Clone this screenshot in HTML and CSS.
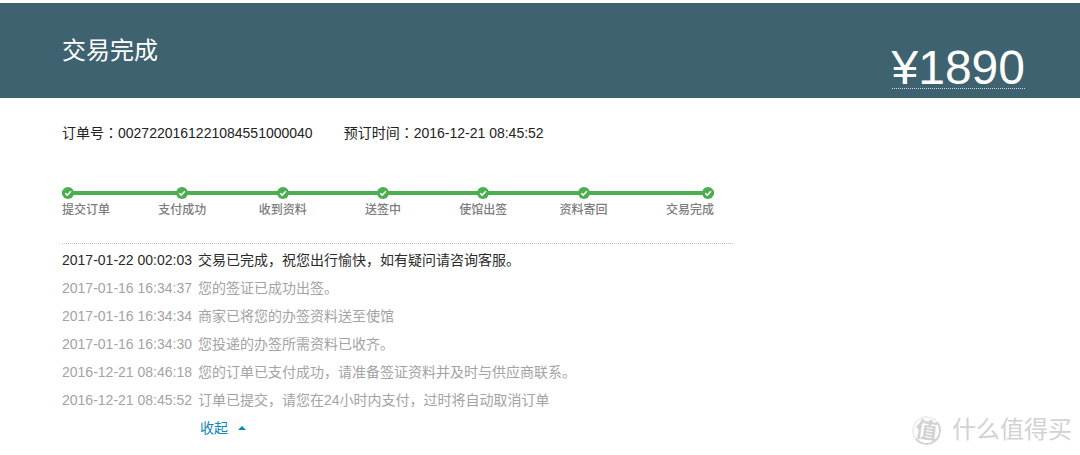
FILE: index.html
```html
<!DOCTYPE html>
<html lang="zh-CN">
<head>
<meta charset="utf-8">
<meta name="viewport" content="width=device-width, initial-scale=1">
<title>交易完成</title>
<link rel="stylesheet" href="styles.css">
</head>
<body>
<svg class="defs" aria-hidden="true">
  <symbol id="tick" viewBox="0 0 12 12">
    <circle cx="6" cy="6" r="6" fill="#4bae50"/>
    <path d="M3.2 6.2 5.2 8.1 8.9 4.2" fill="none" stroke="#fff" stroke-width="1.5"/>
  </symbol>
</svg>
<header class="banner">
  <h1 class="banner-title">交易完成</h1>
  <div class="price">¥1890</div>
</header>
<main class="content">
  <div class="order-info">
    <span>订单号<span class="colon" lang="zh-TW">：</span>0027220161221084551000040</span>
    <span>预订时间<span class="colon" lang="zh-TW">：</span>2016-12-21 08:45:52</span>
  </div>
  <section class="progress">
    <ol class="steps">
      <li class="step"><svg class="tick"><use href="#tick"/></svg><span>提交订单</span></li>
      <li class="step"><svg class="tick"><use href="#tick"/></svg><span>支付成功</span></li>
      <li class="step"><svg class="tick"><use href="#tick"/></svg><span>收到资料</span></li>
      <li class="step"><svg class="tick"><use href="#tick"/></svg><span>送签中</span></li>
      <li class="step"><svg class="tick"><use href="#tick"/></svg><span>使馆出签</span></li>
      <li class="step"><svg class="tick"><use href="#tick"/></svg><span>资料寄回</span></li>
      <li class="step"><svg class="tick"><use href="#tick"/></svg><span>交易完成</span></li>
    </ol>
  </section>
  <ul class="log">
    <li class="entry current"><time>2017-01-22 00:02:03</time><span>交易已完成，祝您出行愉快，如有疑问请咨询客服。</span></li>
    <li class="entry"><time>2017-01-16 16:34:37</time><span>您的签证已成功出签。</span></li>
    <li class="entry"><time>2017-01-16 16:34:34</time><span>商家已将您的办签资料送至使馆</span></li>
    <li class="entry"><time>2017-01-16 16:34:30</time><span>您投递的办签所需资料已收齐。</span></li>
    <li class="entry"><time>2016-12-21 08:46:18</time><span>您的订单已支付成功，请准备签证资料并及时与供应商联系。</span></li>
    <li class="entry"><time>2016-12-21 08:45:52</time><span>订单已提交，请您在24小时内支付，过时将自动取消订单</span></li>
  </ul>
  <button class="toggle" type="button">收起<svg class="caret" viewBox="0 0 8 4"><path d="M0 4 4 0 8 4z" fill="#0a86c2"/></svg></button>
</main>
<div class="watermark">
  <span class="mark">值</span>
  <span>什么值得买</span>
</div>
</body>
</html>
```
FILE: styles.css
```css
* {
  box-sizing: border-box;
}

body {
  margin: 0;
  padding-top: 3px;
  background: #fff;
  color: #222;
  font: 14px/20px "Liberation Sans", "Noto Sans CJK SC", sans-serif;
}

.defs {
  display: none;
}

.banner {
  display: flex;
  justify-content: space-between;
  align-items: flex-end;
  padding: 32px 55px 9px 62px;
  background: #3f6270;
  color: #fff;
}

.banner-title {
  align-self: flex-start;
  margin: 0;
  font-size: 24px;
  font-weight: 400;
  line-height: 32px;
}

.price {
  border-bottom: 1px dotted #d5dde0;
  font-size: 48px;
  line-height: 40px;
  padding-top: 13px;
}

.content {
  padding: 24px 62px 0;
}

.order-info {
  display: flex;
  gap: 31px;
}

.colon {
  font-family: "Noto Sans CJK TC", sans-serif;
}

.progress {
  max-width: 671px;
  margin-top: 44px;
  padding: 0 19px 24px 0;
  border-bottom: 1px dotted #bbb;
}

.steps {
  display: grid;
  grid-template-columns: 70fr repeat(5, 100fr) 80fr;
  margin: 0;
  padding: 0;
  list-style: none;
  background: linear-gradient(#4bae50, #4bae50) 0 4px / 100% 4px no-repeat;
}

.step {
  display: flex;
  flex-direction: column;
  align-items: center;
  gap: 2px;
  color: #7c7c7c;
  font-size: 12px;
  font-weight: 500;
  line-height: 18px;
}

.step:first-child {
  align-items: flex-start;
}

.step:last-child {
  align-items: flex-end;
}

.tick {
  width: 12px;
  height: 12px;
}

.log {
  margin: 2px 0 0;
  padding: 0;
  list-style: none;
}

.entry {
  display: flex;
  gap: 4px;
  color: #a3a3a3;
  line-height: 28px;
}

.entry time {
  flex: 0 0 132px;
}

.entry.current {
  color: #2b2b2b;
}

.toggle {
  display: flex;
  align-items: center;
  gap: 10px;
  margin-left: 138px;
  padding: 4px 0;
  border: 0;
  background: none;
  color: #0a86c2;
  font: inherit;
  cursor: pointer;
}

.caret {
  width: 8px;
  height: 4px;
}

.watermark {
  position: absolute;
  right: 8px;
  bottom: 10px;
  display: flex;
  align-items: center;
  gap: 11px;
  color: #d2d2d2;
  font-size: 24px;
  line-height: 30px;
}

.mark {
  display: flex;
  align-items: center;
  justify-content: center;
  width: 29px;
  height: 29px;
  border: 2px solid #d2d2d2;
  border-left-color: #eee;
  border-top-color: #eee;
  border-radius: 50%;
  font-size: 22px;
  font-weight: 700;
  transform: rotate(8deg);
}
```
